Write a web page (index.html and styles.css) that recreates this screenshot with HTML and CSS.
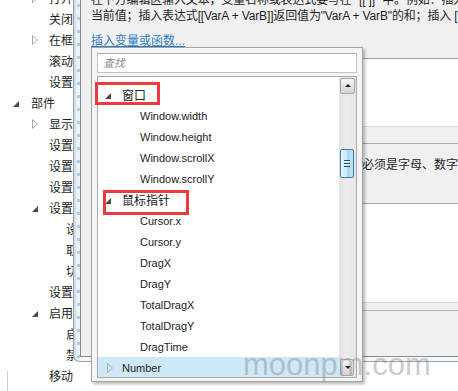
FILE: index.html
```html
<!DOCTYPE html>
<html lang="zh-CN">

<head>
    <meta charset="UTF-8">
    <title>插入变量或函数</title>
    <link rel="stylesheet" href="styles.css">
</head>

<body>
    <!-- 左侧用例树 -->
    <ul class="tree">
        <li class="lv2 closed"><svg class="tw" viewBox="0 0 6 10"><path d="M0.5 0.5L5.5 5L0.5 9.5Z" /></svg>打开链接</li>
        <li class="lv2 leaf">关闭窗口</li>
        <li class="lv2 closed"><svg class="tw" viewBox="0 0 6 10"><path d="M0.5 0.5L5.5 5L0.5 9.5Z" /></svg>在框架中打开链接</li>
        <li class="lv2 leaf">滚动到元件</li>
        <li class="lv2 leaf">设置自适应视图</li>
        <li class="lv1 open"><svg class="tw" viewBox="0 0 6 6"><path d="M6 0V6H0Z" /></svg>部件</li>
        <li class="lv2 closed"><svg class="tw" viewBox="0 0 6 10"><path d="M0.5 0.5L5.5 5L0.5 9.5Z" /></svg>显示/隐藏</li>
        <li class="lv2 leaf">设置面板状态</li>
        <li class="lv2 leaf">设置文本</li>
        <li class="lv2 leaf">设置图片</li>
        <li class="lv2 open"><svg class="tw" viewBox="0 0 6 6"><path d="M6 0V6H0Z" /></svg>设置选中</li>
        <li class="lv3">设为选中</li>
        <li class="lv3">取消选中</li>
        <li class="lv3">切换选中状态</li>
        <li class="lv2 leaf">设置列表选中项</li>
        <li class="lv2 open"><svg class="tw" viewBox="0 0 6 6"><path d="M6 0V6H0Z" /></svg>启用/禁用</li>
        <li class="lv3">启用</li>
        <li class="lv3">禁用</li>
        <li class="lv2 leaf">移动</li>
    </ul>
    <div class="tree-edge"></div>

    <!-- 编辑文本对话框 -->
    <div class="dialog">
        <div class="dialog-body">
            <p class="hint">在下方编辑区输入文本，变量名称或表达式要写在 "[[ ]]" 中。例如：插入 [[OnLoadVariable]] 返回值为变量<br>当前值；插入表达式[[VarA + VarB]]返回值为"VarA + VarB"的和；插入 [[PageName]]</p>
            <a class="insert-link" href="#">插入变量或函数...</a>
            <div class="editor"></div>
            <div class="section">
                <p class="note">在下方创建用于插入元件值的局部变量，变量名称必须是字母、数字，不允许包含空格。</p>
                <div class="editor tall"></div>
                <div class="rule"></div>
            </div>
        </div>
    </div>

    <!-- 变量/函数下拉 -->
    <div class="popup">
        <div class="search">查找</div>
        <div class="list">
            <div class="items">
                <div class="row"></div>
                <div class="row group"><svg class="tw" viewBox="0 0 6 6"><path d="M6 0V6H0Z" /></svg>窗口</div>
                <div class="row item">Window.width</div>
                <div class="row item">Window.height</div>
                <div class="row item">Window.scrollX</div>
                <div class="row item">Window.scrollY</div>
                <div class="row group"><svg class="tw" viewBox="0 0 6 6"><path d="M6 0V6H0Z" /></svg>鼠标指针</div>
                <div class="row item">Cursor.x</div>
                <div class="row item">Cursor.y</div>
                <div class="row item">DragX</div>
                <div class="row item">DragY</div>
                <div class="row item">TotalDragX</div>
                <div class="row item">TotalDragY</div>
                <div class="row item">DragTime</div>
                <div class="row group closed selected"><svg class="tw" viewBox="0 0 6 10"><path d="M0.5 0.5L5.5 5L0.5 9.5Z" /></svg>Number</div>
            </div>
            <div class="scrollbar">
                <div class="sb-btn up"></div>
                <div class="sb-thumb"></div>
                <div class="sb-btn down"></div>
            </div>
        </div>
        <!-- 标注框 -->
        <div class="mark mark-window"></div>
        <div class="mark mark-cursor"></div>
    </div>

    <div class="watermark">moonpm.com</div>
</body>

</html>
```

FILE: styles.css
```css
* {
    box-sizing: border-box;
}

body {
    margin: 0;
    width: 458px;
    height: 391px;
    overflow: hidden;
    position: relative;
    background: #fff;
    font-family: "Liberation Sans", "Noto Sans CJK SC", sans-serif;
    font-size: 12px;
    color: #1e1e1e;
}

/* 左侧树 */
.tree {
    list-style: none;
    margin: -13px 0 0;
    padding: 0;
}

.tree li {
    height: 21px;
    display: flex;
    align-items: center;
    white-space: nowrap;
}

.tw {
    flex: none;
}

.open .tw {
    width: 6px;
    height: 6px;
    margin-top: 2px;
    fill: #4a4a4a;
}

.closed .tw {
    width: 6px;
    height: 10px;
    fill: none;
    stroke: #a8a8a8;
}

.lv1 {
    padding-left: 13px;
}

.lv1 .tw {
    margin-right: 12px;
}

.lv2 {
    padding-left: 32px;
}

.lv2 .tw {
    margin-right: 11px;
}

.lv2.leaf {
    padding-left: 49px;
}

.lv3 {
    padding-left: 66px;
}

.tree-edge {
    position: absolute;
    left: 7px;
    top: 371px;
    width: 1px;
    height: 20px;
    background: #cfcfcf;
}

/* 对话框 */
.dialog {
    position: absolute;
    left: 73px;
    top: -40px;
    width: 420px;
    height: 402px;
    padding: 0 0 4px 6px;
    border-left: 1px solid #9aa2ab;
    border-bottom: 1px solid #9aa2ab;
    border-radius: 0 0 0 7px;
    background:
        repeating-linear-gradient(180deg, rgba(130, 180, 225, 0) 0 5px, rgba(130, 180, 225, .6) 5px 8px, rgba(130, 180, 225, 0) 8px 13px) 3px 0 / 3px 100% no-repeat,
        linear-gradient(90deg, #d2d8de 0, #dfe5eb 2px, #eef5fc 3px, #e8f1fa 5px, #f4f8fc 6px);
}

.dialog-body {
    height: 100%;
    padding: 32px 0 0 10px;
    border-left: 1px solid #858b92;
    border-bottom: 1px solid #858b92;
    background: #f0f0f0;
}

.hint {
    margin: 0;
    line-height: 16px;
    letter-spacing: -0.15px;
    white-space: nowrap;
}

.insert-link {
    display: block;
    width: max-content;
    margin-top: 9px;
    line-height: 16px;
    color: #2f7bc6;
}

.editor {
    margin-top: 9px;
    height: 69px;
    border-top: 1px solid #a0a0a0;
    border-bottom: 1px solid #d6dee6;
    background: #fff;
}

.section {
    margin-top: 16px;
    padding-top: 13px;
    border-top: 1px solid #ababab;
}

.note {
    margin: 0 0 0 7px;
    line-height: 16px;
    white-space: nowrap;
}

.editor.tall {
    margin-top: 30px;
    height: 100px;
    border-top-color: #a8a8a8;
    border-bottom-color: #dadada;
}

.rule {
    margin-top: 7px;
    border-top: 1px solid #b6b6b6;
}

/* 下拉面板 */
.popup {
    position: absolute;
    left: 91px;
    top: 47px;
    width: 272px;
    height: 335px;
    padding: 5px 5px 3px 5px;
    border: 1px solid #a3a3a3;
    background: #f5f5f5;
    box-shadow: 2px 2px 3px rgba(0, 0, 0, .28);
    display: flex;
    flex-direction: column;
    gap: 3px;
}

.search {
    height: 20px;
    padding-left: 5px;
    border: 1px solid #c2c2c2;
    border-top-color: #acacac;
    background: #fff;
    color: #8e8e8e;
    font-style: italic;
    font-size: 11px;
    line-height: 18px;
}

.list {
    flex: 1;
    display: flex;
    border: 1px solid #ababab;
    background: #fff;
    overflow: hidden;
}

.items {
    flex: 1;
    overflow: hidden;
}

.row {
    height: 21px;
    display: flex;
    align-items: center;
    white-space: nowrap;
    font-size: 11px;
    color: #222;
}

.row:first-child {
    margin-top: -14px;
}

.item {
    padding-left: 42px;
}

.group {
    padding-left: 7px;
    font-size: 12px;
}

.group .tw {
    width: 6px;
    height: 6px;
    margin: 2px 11px 0 0;
    fill: #4a4a4a;
}

.group.closed {
    padding-left: 9px;
    font-size: 11px;
}

.group.closed .tw {
    width: 6px;
    height: 10px;
    margin: 0 9px 0 0;
    fill: none;
    stroke: #b2b2b2;
}

.selected {
    background: #cde8f6;
}

/* 滚动条 */
.scrollbar {
    width: 17px;
    display: flex;
    flex-direction: column;
    padding: 1px;
    background: linear-gradient(90deg, #e2e2e2, #ececec 40%, #e6e6e6);
}

.sb-btn {
    position: relative;
    height: 16px;
    border: 1px solid #a7a7a7;
    border-radius: 2px;
    background: linear-gradient(#f8f8f8, #e2e2e2 50%, #d6d6d6);
}

.sb-btn::after {
    content: "";
    position: absolute;
    left: 4px;
    top: 5px;
    border-left: 3px solid transparent;
    border-right: 3px solid transparent;
}

.up::after {
    border-bottom: 3px solid #222;
}

.down {
    height: 17px;
    margin-top: auto;
    margin-right: 1px;
}

.down::after {
    top: 6px;
    border-top: 3px solid #222;
}

.sb-thumb {
    position: relative;
    height: 29px;
    margin: 55px 1px 0 0;
    border: 1px solid #3a7db3;
    border-radius: 2px;
    background: linear-gradient(90deg, #e6f5fd, #cbe9fa 45%, #a8d8f3 55%, #bde2f7);
}

.sb-thumb::after {
    content: "";
    position: absolute;
    left: 3px;
    top: 10px;
    width: 6px;
    height: 7px;
    background: repeating-linear-gradient(#27496a 0 1px, #f0f8ff 1px 2px, transparent 2px 3px);
}

/* 红色标注 */
.mark {
    position: absolute;
    border: 3px solid #ec3a3f;
}

.mark-window {
    left: 3px;
    top: 34px;
    width: 65px;
    height: 23px;
}

.mark-cursor {
    left: 11px;
    top: 142px;
    width: 86px;
    height: 25px;
}

.watermark {
    position: absolute;
    left: 243px;
    top: 349px;
    font-size: 31px;
    line-height: 31px;
    color: rgba(140, 140, 140, .45);
    pointer-events: none;
}
```
